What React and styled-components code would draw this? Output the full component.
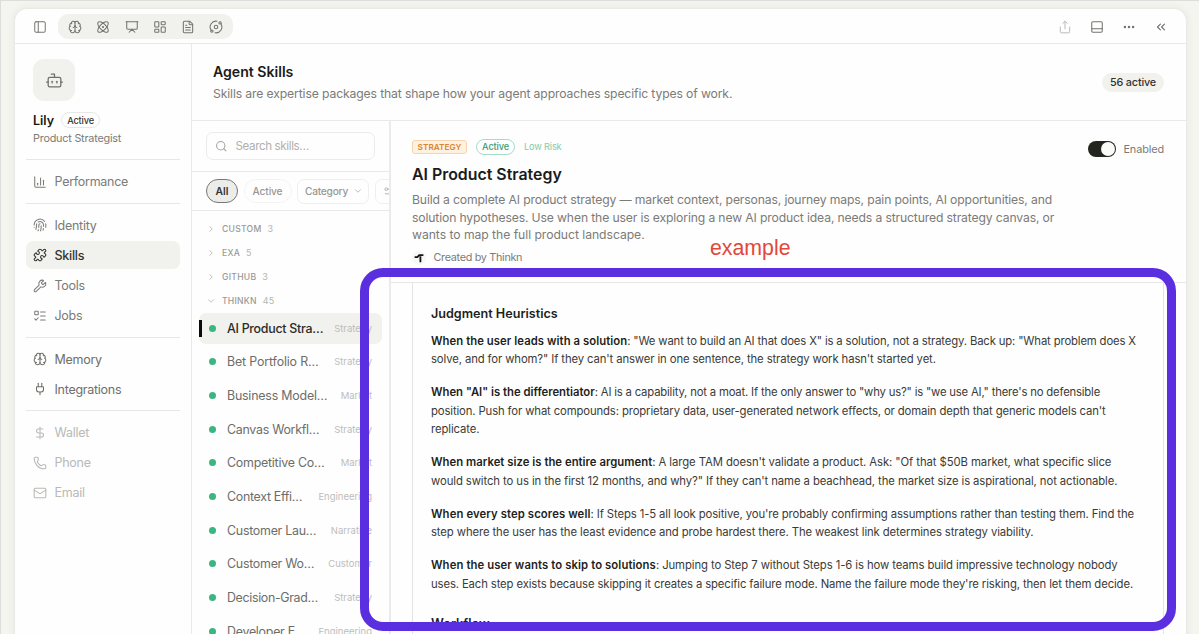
import React from "react";
import styled, { createGlobalStyle } from "styled-components";
import {
  Atom,
  Bot,
  Brain,
  ChartColumn,
  ChevronDown,
  ChevronRight,
  ChevronsLeft,
  DollarSign,
  Ellipsis,
  FileText,
  Fingerprint,
  LayoutDashboard,
  ListTodo,
  Mail,
  Orbit,
  PanelBottom,
  PanelLeft,
  Phone,
  Plug,
  Presentation,
  Puzzle,
  Search,
  Settings2,
  Share,
  Wrench,
} from "lucide-react";

const GlobalStyle = createGlobalStyle`
  * {
    box-sizing: border-box;
  }

  body {
    margin: 0;
    overflow: hidden;
    font-family: Inter, "Liberation Sans", sans-serif;
    color: #1f1f1d;
  }

  h1, h2, h3, p {
    margin: 0;
  }
`;

const Page = styled.div`
  position: relative;
  height: 634px;
  overflow: hidden;
  padding: 7px 12px 0 13px;
  background: #f5f5f0;
  border-top: 1px solid #dddddb;
  border-left: 1px solid #dddddb;
`;

const Window = styled.div`
  height: 640px;
  display: flex;
  flex-direction: column;
  background: #fefefe;
  border: 1px solid #e9e9e6;
  border-radius: 13px;
  box-shadow: 0 0 7px rgba(60, 60, 40, 0.08);
  overflow: hidden;
`;

const Text = styled.span`
  font-size: ${(p) => p.$size || 12}px;
  font-weight: ${(p) => p.$weight || 400};
  letter-spacing: ${(p) => p.$ls || 0}px;
  color: ${(p) => p.$color || "#7b7b77"};
  white-space: nowrap;
`;

const Toolbar = styled.header`
  flex: none;
  height: 35px;
  display: flex;
  align-items: center;
  justify-content: space-between;
  padding: 1px 18.5px 0 18px;
  border-bottom: 1px solid #e9e9e7;
  color: #73736f;
`;

const ToolGroup = styled.div`
  display: flex;
  align-items: center;
  gap: ${(p) => p.$gap}px;
`;

const ToolPill = styled.div`
  display: flex;
  align-items: center;
  gap: 14.3px;
  height: 25px;
  padding: 0 10px;
  border-radius: 10px;
  background: #f1f1ee;
`;

const Columns = styled.div`
  flex: 1;
  min-height: 0;
  display: flex;
`;

const Sidebar = styled.aside`
  flex: none;
  width: 177px;
  padding: 15px 11px 0 11px;
  border-right: 1px solid #e9e9e7;
`;

const Avatar = styled.div`
  width: 42px;
  height: 42px;
  margin-left: 7px;
  display: flex;
  align-items: center;
  justify-content: center;
  border-radius: 11px;
  background: #f1f1ee;
  color: #6f6f6b;
`;

const NameRow = styled.div`
  display: flex;
  align-items: center;
  gap: 7px;
  height: 16px;
  margin: 11px 0 0 7px;
`;

const Pill = styled.span`
  flex: none;
  display: inline-flex;
  align-items: center;
  justify-content: center;
  width: ${(p) => p.$width}px;
  height: ${(p) => p.$height}px;
  border: 1px solid ${(p) => p.$border || "#e7e7e4"};
  border-radius: 20px;
  background: ${(p) => p.$bg || "transparent"};
`;

const Role = styled.div`
  height: 16px;
  margin: 3px 0 12.4px 7px;
  line-height: 16px;
  display: flex;
`;

const NavSection = styled.nav`
  border-top: 1px solid #e7e7e5;
  padding: 7.5px 0 7px;
`;

const NavItem = styled.div`
  display: flex;
  align-items: center;
  gap: 7.5px;
  height: 28px;
  margin-bottom: 2.1px;
  padding-left: 7px;
  border-radius: 7px;
  background: ${(p) => (p.$active ? "#f1f1ee" : "transparent")};
  color: ${(p) => p.$color};

  &:last-child {
    margin-bottom: 0;
  }
`;

const Main = styled.main`
  flex: 1;
  min-width: 0;
  display: flex;
  flex-direction: column;
`;

const PageHead = styled.div`
  flex: none;
  height: 77px;
  display: flex;
  align-items: center;
  justify-content: space-between;
  padding: 0 22px 0 21px;
  border-bottom: 1px solid #e9e9e7;
`;

const HeadText = styled.div`
  display: flex;
  flex-direction: column;
  gap: 4px;
  padding-top: 2px;
  line-height: 18px;
`;

const Split = styled.div`
  flex: 1;
  min-height: 0;
  display: flex;
`;

const ListPane = styled.section`
  flex: none;
  width: 199px;
  overflow: hidden;
  border-right: 2px solid #ebebea;
`;

const SearchBar = styled.div`
  height: 51px;
  padding: 11px 14px;
  border-bottom: 1px solid #e9e9e7;
`;

const SearchField = styled.div`
  display: flex;
  align-items: center;
  gap: 8px;
  height: 28px;
  padding-left: 8px;
  border: 1px solid #ebebe9;
  border-radius: 7px;
  color: #a3a39f;
`;

const Filters = styled.div`
  display: flex;
  align-items: center;
  gap: 5.5px;
  height: 39px;
  padding-left: 14px;
  border-bottom: 1px solid #e9e9e7;
`;

const FilterBox = styled.div`
  flex: none;
  display: flex;
  align-items: center;
  gap: 5px;
  width: ${(p) => p.$width}px;
  height: 25px;
  padding-left: 7px;
  border: 1px solid #efefed;
  border-radius: 7px;
  color: #b0b0ac;
`;

const Groups = styled.div`
  padding-top: 5.5px;
`;

const Group = styled.div`
  display: flex;
  align-items: center;
  gap: 6px;
  height: 24px;
  padding-left: 14px;
  color: #b5b5b1;
`;

const SkillRow = styled.div`
  display: flex;
  align-items: center;
  height: 31px;
  margin: 0 7px 2.7px 7px;
  padding: 0 10px 0 0;
  border-radius: 7px;
  background: ${(p) => (p.$active ? "#f1f1ee" : "transparent")};
`;

const Marker = styled.i`
  width: 2.5px;
  height: 17px;
  background: ${(p) => (p.$active ? "#0c0c0c" : "transparent")};
`;

const Dot = styled.i`
  flex: none;
  width: 7px;
  height: 7px;
  margin: 0 11px 0 7.5px;
  border-radius: 50%;
  background: #3bb681;
`;

const RowTag = styled(Text)`
  margin-left: auto;
`;

const Detail = styled.section`
  flex: 1;
  min-width: 0;
`;

const Summary = styled.div`
  height: 162px;
  padding: 16px 22px 0 21px;
  border-bottom: 1px solid #e7e7e5;
`;

const SummaryTop = styled.div`
  display: flex;
  align-items: center;
  justify-content: space-between;
  height: 19px;
`;

const Badges = styled.div`
  display: flex;
  align-items: center;
  gap: 9px;
`;

const CategoryBadge = styled.span`
  display: flex;
  align-items: center;
  justify-content: center;
  width: 55px;
  height: 14px;
  border: 1px solid #f6d5ae;
  border-radius: 3px;
  background: #fef1df;
`;

const Toggle = styled.div`
  display: flex;
  align-items: center;
  gap: 7px;
  margin-top: 4px;
`;

const Switch = styled.span`
  display: flex;
  justify-content: flex-end;
  width: 28px;
  height: 16px;
  padding: 1px;
  border-radius: 8px;
  background: #25251f;
`;

const Knob = styled.span`
  width: 14px;
  height: 14px;
  border-radius: 50%;
  background: #fafaf7;
`;

const Title = styled.h1`
  height: 20px;
  margin-top: 9px;
  line-height: 20px;
  display: flex;
`;

const Lines = styled.p`
  display: flex;
  flex-direction: column;
  margin-top: ${(p) => p.$top || 0}px;
  line-height: ${(p) => p.$lh}px;
`;

const Author = styled.div`
  display: flex;
  align-items: center;
  gap: 7.5px;
  height: 16px;
  margin-top: 6px;
`;

const AuthorLogo = styled.span`
  display: flex;
  align-items: center;
  justify-content: center;
  width: 14px;
  height: 14px;
  border-radius: 50%;
  background: #f7f7f6;
`;

const Document = styled.article`
  height: 400px;
  margin: 0 22px 0 21px;
  padding: 21px 18px 0;
  border: 1px solid #e3e3e1;
  border-top: none;
`;

const DocHeading = styled.h3`
  display: flex;
  height: 20px;
  line-height: 20px;
  margin-top: ${(p) => p.$top || 0}px;
`;

const Highlight = styled.div`
  position: absolute;
  left: 359px;
  top: 267px;
  width: 816px;
  height: 363px;
  border: 9px solid #5a2fe0;
  border-radius: 23px;
`;

const Note = styled.div`
  position: absolute;
  left: 709px;
  top: 234px;
  font-family: "Liberation Sans", Arial, sans-serif;
  font-size: 21.3px;
  line-height: 26px;
  color: #e2473a;
`;

const navSections = [
  { color: "#7b7b77", items: [[ChartColumn, "Performance"]] },
  {
    color: "#7b7b77",
    items: [
      [Fingerprint, "Identity"],
      [Puzzle, "Skills", true],
      [Wrench, "Tools"],
      [ListTodo, "Jobs"],
    ],
  },
  { color: "#6f6f6b", items: [[Brain, "Memory"], [Plug, "Integrations"]] },
  { color: "#b9b9b6", items: [[DollarSign, "Wallet"], [Phone, "Phone"], [Mail, "Email"]] },
];

const groups = [
  ["CUSTOM", 3],
  ["EXA", 5],
  ["GITHUB", 3],
  ["THINKN", 45, true],
];

// name, tag, letter spacing
const skills = [
  ["AI Product Stra…", "Strategy", -0.27],
  ["Bet Portfolio R…", "Strategy", -0.15],
  ["Business Model…", "Market", -0.2],
  ["Canvas Workfl…", "Strategy", -0.27],
  ["Competitive Co…", "Market", -0.23],
  ["Context Effi…", "Engineering", -0.3],
  ["Customer Lau…", "Narrative", -0.25],
  ["Customer Wo…", "Customer", -0.25],
  ["Decision-Grad…", "Strategy", -0.33],
  ["Developer E…", "Engineering", -0.25],
];

const description = [
  ["Build a complete AI product strategy — market context, personas, journey maps, pain points, AI opportunities, and", -0.15],
  ["solution hypotheses. Use when the user is exploring a new AI product idea, needs a structured strategy canvas, or", -0.145],
  ["wants to map the full product landscape.", -0.05],
];

// bold lead, rest of the line, letter spacing of the rest, letter spacing of the lead
const heuristics = [
  [
    ["When the user leads with a solution", ": \"We want to build an AI that does X\" is a solution, not a strategy. Back up: \"What problem does X", -0.14, 0.06],
    ["", "solve, and for whom?\" If they can't answer in one sentence, the strategy work hasn't started yet.", -0.11],
  ],
  [
    ["When \"AI\" is the differentiator", ": AI is a capability, not a moat. If the only answer to \"why us?\" is \"we use AI,\" there's no defensible", -0.18, 0],
    ["", "position. Push for what compounds: proprietary data, user-generated network effects, or domain depth that generic models can't", -0.12],
    ["", "replicate.", -0.1],
  ],
  [
    ["When market size is the entire argument", ": A large TAM doesn't validate a product. Ask: \"Of that $50B market, what specific slice", -0.07, 0.03],
    ["", "would switch to us in the first 12 months, and why?\" If they can't name a beachhead, the market size is aspirational, not actionable.", -0.085],
  ],
  [
    ["When every step scores well", ": If Steps 1-5 all look positive, you're probably confirming assumptions rather than testing them. Find the", -0.105, 0.1],
    ["", "step where the user has the least evidence and probe hardest there. The weakest link determines strategy viability.", -0.095],
  ],
  [
    ["When the user wants to skip to solutions", ": Jumping to Step 7 without Steps 1-6 is how teams build impressive technology nobody", -0.085, 0.1],
    ["", "uses. Each step exists because skipping it creates a specific failure mode. Name the failure mode they're risking, then let them decide.", -0.115],
  ],
];

const tools = [Brain, Atom, Presentation, LayoutDashboard, FileText, Orbit];

const App = () => {
  return (
    <Page>
      <GlobalStyle />
      <Window>
        <Toolbar>
          <ToolGroup $gap={11}>
            <PanelLeft size={14} strokeWidth={1.7} />
            <ToolPill>
              {tools.map((Icon, i) => (
                <Icon key={i} size={14} strokeWidth={1.8} />
              ))}
            </ToolPill>
          </ToolGroup>
          <ToolGroup $gap={18}>
            <Share size={14} strokeWidth={1.7} color="#b9b9b6" />
            <PanelBottom size={14} strokeWidth={1.8} />
            <Ellipsis size={14} strokeWidth={2.2} />
            <ChevronsLeft size={14} strokeWidth={2} />
          </ToolGroup>
        </Toolbar>

        <Columns>
          <Sidebar>
            <Avatar>
              <Bot size={19} strokeWidth={1.6} />
            </Avatar>
            <NameRow>
              <Text $size={12.5} $weight={600} $color="#161614">Lily</Text>
              <Pill $width={39} $height={16}>
                <Text $size={9.2} $weight={500} $ls={-0.15} $color="#33332f">Active</Text>
              </Pill>
            </NameRow>
            <Role>
              <Text $size={10.8} $ls={-0.2}>Product Strategist</Text>
            </Role>
            {navSections.map((section, i) => (
              <NavSection key={i}>
                {section.items.map(([Icon, label, active]) => (
                  <NavItem key={label} $active={active} $color={active ? "#33332f" : section.color}>
                    <Icon size={14} strokeWidth={1.8} />
                    <Text $size={12.5} $ls={-0.27} $weight={active ? 500 : 400} $color="inherit">{label}</Text>
                  </NavItem>
                ))}
              </NavSection>
            ))}
          </Sidebar>

          <Main>
            <PageHead>
              <HeadText>
                <Text $size={14.1} $weight={600} $color="#1b1b19">Agent Skills</Text>
                <Text $size={12.2} $ls={-0.13}>Skills are expertise packages that shape how your agent approaches specific types of work.</Text>
              </HeadText>
              <Pill $width={62} $height={19} $bg="#f1f1ee" $border="#f1f1ee">
                <Text $size={10.8} $weight={500} $ls={-0.15} $color="#33332f">56 active</Text>
              </Pill>
            </PageHead>

            <Split>
              <ListPane>
                <SearchBar>
                  <SearchField>
                    <Search size={12.5} strokeWidth={2} />
                    <Text $size={11.6} $ls={-0.38} $color="#b0b0ac">Search skills…</Text>
                  </SearchField>
                </SearchBar>
                <Filters>
                  <Pill $width={32} $height={24} $bg="#ececea" $border="#777774">
                    <Text $size={10.3} $weight={600} $color="#33332f">All</Text>
                  </Pill>
                  <Pill $width={48} $height={24} $border="#f3f3f1">
                    <Text $size={10.2} $weight={500} $ls={-0.15} $color="#989894">Active</Text>
                  </Pill>
                  <FilterBox $width={72}>
                    <Text $size={10.2} $weight={500} $ls={-0.25} $color="#989894">Category</Text>
                    <ChevronDown size={10} />
                  </FilterBox>
                  <FilterBox $width={40}>
                    <Settings2 size={11} />
                  </FilterBox>
                </Filters>
                <Groups>
                  {groups.map(([name, count, open]) => (
                    <Group key={name}>
                      {open ? <ChevronDown size={10} /> : <ChevronRight size={10} />}
                      <Text $size={8.6} $weight={500} $ls={0.25} $color="#999995">{name}</Text>
                      <Text $size={9} $ls={0.1} $color="#b5b5b1">{count}</Text>
                    </Group>
                  ))}
                  {skills.map(([name, tag, ls], i) => (
                    <SkillRow key={name} $active={i === 0}>
                      <Marker $active={i === 0} />
                      <Dot />
                      <Text $size={12.4} $ls={ls} $weight={i === 0 ? 500 : 400} $color={i === 0 ? "#2b2b28" : "#6d6d69"}>
                        {name}
                      </Text>
                      <RowTag $size={9.5} $color="#bdbdba">{tag}</RowTag>
                    </SkillRow>
                  ))}
                </Groups>
              </ListPane>

              <Detail>
                <Summary>
                  <SummaryTop>
                    <Badges>
                      <CategoryBadge>
                        <Text $size={8.2} $weight={600} $ls={0.05} $color="#d9862f">STRATEGY</Text>
                      </CategoryBadge>
                      <Pill $width={39} $height={16} $border="#a5dcc4">
                        <Text $size={9.2} $weight={500} $ls={-0.15} $color="#3c9a72">Active</Text>
                      </Pill>
                      <Text $size={9.2} $ls={-0.15} $color="#7fcbaa">Low Risk</Text>
                    </Badges>
                    <Toggle>
                      <Switch>
                        <Knob />
                      </Switch>
                      <Text $size={10.9} $ls={-0.12}>Enabled</Text>
                    </Toggle>
                  </SummaryTop>
                  <Title>
                    <Text $size={15.9} $weight={600} $color="#1b1b19">AI Product Strategy</Text>
                  </Title>
                  <Lines $top={6} $lh={17.6}>
                    {description.map(([line, ls]) => (
                      <Text key={line} $size={12.2} $ls={ls}>{line}</Text>
                    ))}
                  </Lines>
                  <Author>
                    <AuthorLogo>
                      <svg width="10" height="10" viewBox="0 0 10 10" fill="none" stroke="#151513">
                        <path d="M.6 4.2H3.4L5.2 2.2H9.4M6.4 3.2V9.2" strokeWidth="1.8" />
                      </svg>
                    </AuthorLogo>
                    <Text $size={10.8} $ls={-0.3}>Created by Thinkn</Text>
                  </Author>
                </Summary>
                <Document>
                  <DocHeading>
                    <Text $size={12.6} $weight={600} $color="#1f1f1d">Judgment Heuristics</Text>
                  </DocHeading>
                  {heuristics.map((lines, i) => (
                    <Lines key={i} $top={i === 0 ? 7.8 : 14.3} $lh={18.6}>
                      {lines.map(([lead, rest, ls, leadLs]) => (
                        <Text key={rest} $size={11.3} $ls={ls} $color="#3a3a37">
                          {lead && (
                            <Text as="strong" $size={11.3} $ls={leadLs} $weight={600} $color="#1f1f1d">{lead}</Text>
                          )}
                          {rest}
                        </Text>
                      ))}
                    </Lines>
                  ))}
                  <DocHeading $top={20.7}>
                    <Text $size={12.6} $weight={600} $color="#1f1f1d">Workflow</Text>
                  </DocHeading>
                </Document>
              </Detail>
            </Split>
          </Main>
        </Columns>
      </Window>
      <Note>example</Note>
      <Highlight />
    </Page>
  );
};

export default App;
